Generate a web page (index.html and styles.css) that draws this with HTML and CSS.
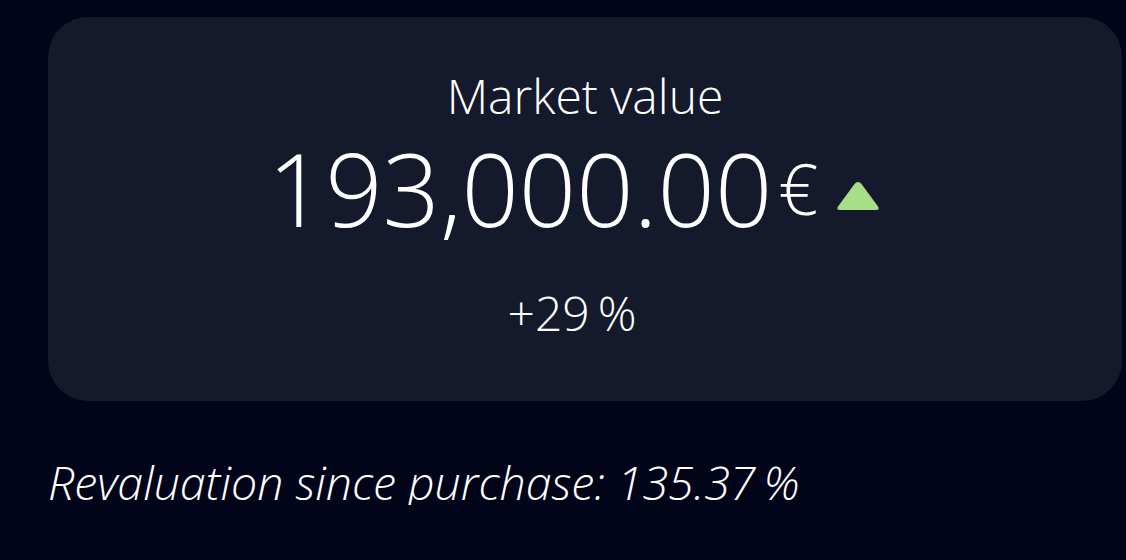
FILE: index.html
```html
<!DOCTYPE html>
<html lang="en">
<head>
<meta charset="utf-8">
<link rel="stylesheet" href="styles.css">
</head>
<body>
<main class="page">
  <section class="card">
    <div class="label">Market value</div>
    <div class="value-row"><span class="amount">193,000.00</span><span class="currency">€</span><svg class="trend" width="44" height="30" viewBox="0 0 44 30" aria-hidden="true"><path d="M22 1 Q24 1 25.5 3 L42 25.5 Q44 29 40 29 L4 29 Q0 29 2 25.5 L18.5 3 Q20 1 22 1 Z" fill="#a6df88"/></svg></div>
    <div class="change">+29<span class="pct">%</span></div>
  </section>
  <p class="note">Revaluation since purchase: 135.37<span class="pct">%</span></p>
</main>
</body>
</html>
```
FILE: styles.css
```css
html, body {
  margin: 0;
  padding: 0;
  background: #02051a;
}
body {
  font-family: "Open Sans", "Liberation Sans", sans-serif;
  color: #ffffff;
}
.page {
  padding: 17px 4px 0 48px;
}
.card {
  background: #141a2b;
  border-radius: 40px;
  height: 384px;
  box-sizing: border-box;
  padding-top: 55px;
  text-align: center;
}
.label {
  font-size: 48px;
  font-weight: 300;
  line-height: 48px;
}
.value-row {
  margin-top: 18px;
  height: 100px;
  line-height: 100px;
  white-space: nowrap;
  padding-right: 22px;
}
.amount {
  font-size: 100.5px;
  font-weight: 300;
}
.currency {
  font-size: 70px;
  font-weight: 300;
  margin-left: 6px;
  vertical-align: 12px;
}
.trend {
  margin-left: 18px;
  vertical-align: 16px;
}
.change {
  margin-top: 51px;
  font-size: 48px;
  font-weight: 300;
  line-height: 48px;
  padding-right: 26px;
}
.pct {
  margin-left: 8px;
}
.note {
  margin: 58px 0 0;
  font-size: 46.5px;
  font-style: italic;
  font-weight: 300;
  line-height: 46px;
}
```
